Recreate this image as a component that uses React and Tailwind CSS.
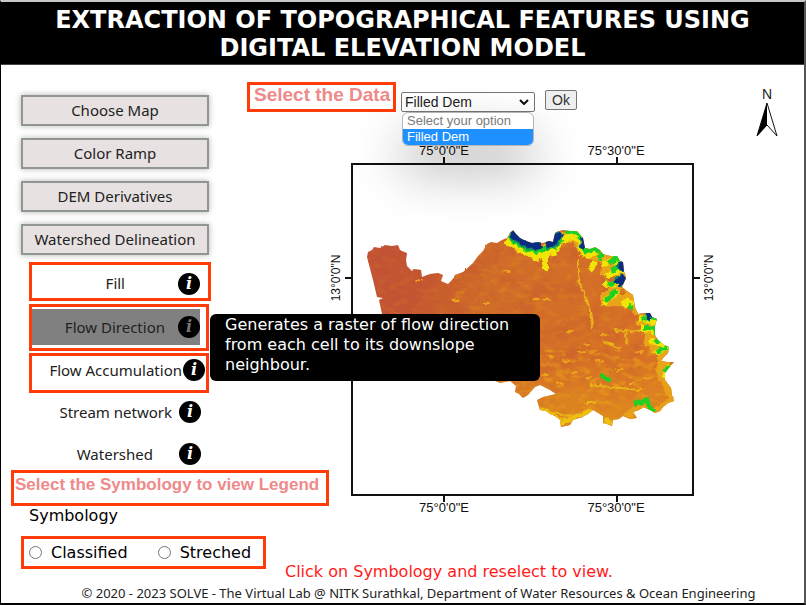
import React from "react";

const COAST =
  "M367 257 L368 252 L372 250 L374 247 L380 248 L385 245 L392 246 L398 245 L400 250 L402 251 L407 253 L406 260 L407 266 L412 271 L414 269 L421 270 L422 277 L430 274 L438 273 L443 275 L441 281 L448 284 L452 280 L455 275 L463 272 L473 263 L478 256 L483 251 L487 244 L491 242 L497 243 L502 240 L507 238 L510 233 L513 230 L516 234 L520 238 L526 241 L532 243 L538 242 L543 243 L549 241 L553 242 L555 233 L559 231 L563 230 L570 231 L577 231 L583 238 L585 248 L590 249 L595 247 L600 250 L603 254 L606 255 L611 256 L617 256 L620 261 L623 262 L624 271 L626 278 L622 287 L627 291 L633 295 L635 307 L638 314 L644 313 L650 313 L652 317 L657 319 L655 326 L655 335 L658 340 L664 345 L669 347 L668 353 L664 357 L661 361 L667 362 L674 362 L669 368 L665 373 L665 380 L671 388 L672 395 L674 401 L668 403 L663 407 L660 411 L655 413 L650 410 L643 407 L639 410 L633 412 L637 418 L630 419 L623 416 L619 419 L613 420 L612 426 L607 424 L603 423 L603 416 L598 413 L593 410 L588 414 L582 417 L573 420 L570 425 L561 427 L560 420 L555 416 L550 414 L546 411 L540 410 L537 400 L543 397 L556 394 L550 390 L540 385 L535 387 L528 395 L523 398 L519 394 L515 392 L516 386 L510 381 L500 383 L470 370 L420 352 L385 338 L382 314 L379 300 L383 298 L377 297 L373 280 Z";

const AMBER = [
  "M508 238 L520 246 L535 252 L552 248 L560 238 L576 234 L584 250 L604 258 L622 272 L621 288",
  "M612 258 L604 276 M620 282 L606 300 L632 300 L630 308",
  "M640 318 L652 330 L650 342 L664 350 L662 376",
];

const YELLOW = [
  "M506 241 L518 247 L530 253 L537 257 L548 252 L557 248 L563 240 L573 235 L580 243 L582 252 L588 256 L598 252",
  "M535 252 L536 261 M545 252 L545 270 M525 248 L527 256 M553 250 L554 256",
  "M602 264 L614 259 L622 270 L605 277 M622 283 L603 284 M618 290 L603 304 M596 262 L590 270",
  "M622 302 L634 304 M624 308 L630 300",
  "M639 318 L656 322 M640 328 L656 332 M650 340 L668 347 L656 353 M664 378 L670 365",
];

const GREEN = [
  "M509 236 L518 244 L528 249 L537 252 L546 248 L555 246 L562 240",
  "M564 231 L577 232 L582 240 L585 251 L595 249 L600 251",
  "M599 261 L603 253 M609 263 L618 257 L624 270 M611 270 L624 266 M607 284 L624 280 M617 290 L606 301",
  "M628 306 L633 308",
  "M642 320 L650 314 L657 320 M644 328 L656 328 L655 335 M655 340 L660 341 M657 352 L668 347 M664 373 L669 366",
  "M600 376 L611 380 M634 404 L646 400 L654 412",
];

const NAVY = [
  "M514 231 L516 237 L525 243 L534 246 L541 244",
  "M546 244 L553 243 L557 237 L561 233",
  "M584 239 L585 248",
  "M621 261 L624 270 M625 277 L617 284",
  "M647 315 L652 317",
];

const VALLEYS =
  "M578 259 L578 275 L582 290 L589 306 L593 330 M603 342 L620 348 M625 332 L628 345 M614 330 L640 332 M552 413 L573 416 M583 403 L596 403 M590 385 L640 390";

const SPECKS = [
  [420, 281], [455, 300], [487, 303], [506, 271], [547, 300], [536, 299], [570, 331],
  [586, 344], [552, 356], [582, 352], [566, 361], [604, 335], [640, 352],
  [600, 360], [620, 370], [575, 372], [590, 378], [545, 375], [647, 378], [560, 383], [632, 384],
];

function InfoIcon({ dim = false }) {
  return (
    <span
      aria-hidden="true"
      className={`flex size-[22px] shrink-0 items-center justify-center rounded-full bg-black font-['DejaVu_Serif','Liberation_Serif',serif] text-[16px] leading-none font-bold italic ${
        dim ? "text-[#777777]" : "text-white"
      }`}
    >
      i
    </span>
  );
}

function MenuButton({ children }) {
  return (
    <button
      type="button"
      className="h-[31px] w-[188px] border-2 border-[#909690] bg-[#e7e1e1] text-center leading-none whitespace-nowrap text-[#222222] shadow-[0_0_6px_rgba(0,0,0,0.3)]"
    >
      {children}
    </button>
  );
}

function Strokes({ paths, color, width }) {
  return paths.map((d) => <path key={d} d={d} stroke={color} strokeWidth={width} />);
}

function Terrain() {
  return (
    <g>
      <defs>
        <clipPath id="basin">
          <path d={COAST} />
        </clipPath>
        <linearGradient id="base" x1="0" x2="1" y1="0.1" y2="0.3">
          <stop offset="0" stopColor="#c25236" />
          <stop offset="0.2" stopColor="#c45632" />
          <stop offset="0.4" stopColor="#cf6a2a" />
          <stop offset="1" stopColor="#d87226" />
        </linearGradient>
        <linearGradient id="lowland" x1="0" x2="0" y1="0" y2="1">
          <stop offset="0.65" stopColor="#e8a015" stopOpacity="0" />
          <stop offset="1" stopColor="#e8a015" stopOpacity="0.6" />
        </linearGradient>
        <filter id="grain" x="0" y="0" width="1" height="1" colorInterpolationFilters="sRGB">
          <feTurbulence type="fractalNoise" baseFrequency="0.09 0.16" numOctaves="4" seed="7" />
          <feColorMatrix values="0 0 0 0 0.92  0 0 0 0 0.64  0 0 0 0 0.1  3.2 0 0 0 -1.5" />
        </filter>
        <filter id="shade" x="0" y="0" width="1" height="1" colorInterpolationFilters="sRGB">
          <feTurbulence type="fractalNoise" baseFrequency="0.05" numOctaves="4" seed="21" />
          <feColorMatrix values="0 0 0 0 0.77  0 0 0 0 0.33  0 0 0 0 0.2  0 4 0 0 -1.8" />
        </filter>
        <filter id="rough" x="-0.1" y="-0.1" width="1.2" height="1.2" colorInterpolationFilters="sRGB">
          <feTurbulence type="fractalNoise" baseFrequency="0.2" numOctaves="2" seed="4" />
          <feDisplacementMap in="SourceGraphic" scale="6" xChannelSelector="R" yChannelSelector="G" />
          <feGaussianBlur stdDeviation="0.7" />
        </filter>
        <filter id="edge" x="-0.05" y="-0.05" width="1.1" height="1.1" colorInterpolationFilters="sRGB">
          <feTurbulence type="fractalNoise" baseFrequency="0.25" numOctaves="1" seed="9" />
          <feDisplacementMap in="SourceGraphic" scale="2" xChannelSelector="R" yChannelSelector="G" />
        </filter>
      </defs>
      <g filter="url(#edge)">
        <path d={COAST} fill="url(#base)" />
        <g clipPath="url(#basin)">
          <rect x="365" y="228" width="312" height="202" filter="url(#shade)" opacity="0.3" />
          <path d="M480 225 H680 V430 H480 Z" fill="url(#lowland)" />
          <rect x="455" y="228" width="222" height="132" filter="url(#grain)" opacity="0.25" />
          <rect x="500" y="350" width="177" height="80" filter="url(#grain)" opacity="0.6" />
          <rect x="365" y="228" width="100" height="102" filter="url(#grain)" opacity="0.15" />
          <g fill="none" filter="url(#rough)" strokeLinejoin="round">
            <path d="M626 285 L634 297 L638 315 M656 340 L664 350 L662 376 L674 401 L655 413 L643 407 L625 417" stroke="#e7a018" strokeWidth="8" />
            <path d="M540 408 L562 422 L575 418 L592 410 M604 420 L614 424" stroke="#ecc012" strokeWidth="5" />
            <Strokes paths={AMBER} color="#e8a51a" width="12" />
            <Strokes paths={YELLOW} color="#f2e406" width="6" />
            <path d={VALLEYS} stroke="#e9b416" strokeWidth="2" />
            <Strokes paths={GREEN} color="#1fd024" width="5" />
            <Strokes paths={NAVY} color="#17836c" width="10" />
            <Strokes paths={NAVY} color="#0b2d80" width="7" />
          </g>
          <g filter="url(#rough)" fill="#eaa31b">
            {SPECKS.map(([x, y]) => <ellipse key={`${x}-${y}`} cx={x} cy={y} rx="4" ry="1.2" />)}
          </g>
        </g>
      </g>
    </g>
  );
}

function MapFigure() {
  return (
    <svg viewBox="328 142 390 374" className="h-[374px] w-[390px] shrink-0" role="img" aria-label="Filled DEM map">
      <Terrain />
      <g fill="none" stroke="#111111" strokeWidth="2">
        <rect x="352" y="164" width="341" height="331" />
        <path d="M444 157 V164 M617 157 V164 M444 495 V502 M617 495 V502 M345 278 H352 M693 278 H700" />
      </g>
      <g className="font-['Liberation_Sans',Arial,sans-serif] text-[12px]" fill="#111111" textAnchor="middle">
        <g className="text-[13px]">
          <text x="444" y="155">75°0'0"E</text>
          <text x="616" y="155">75°30'0"E</text>
          <text x="444" y="512">75°0'0"E</text>
          <text x="616" y="512">75°30'0"E</text>
        </g>
        <text transform="translate(340 278) rotate(-90)">13°0'0"N</text>
        <text transform="translate(713 278) rotate(-90)">13°0'0"N</text>
      </g>
    </svg>
  );
}

function NorthArrow() {
  return (
    <svg viewBox="0 0 24 52" className="h-[52px] w-6" role="img" aria-label="North">
      <text x="12" y="13" textAnchor="middle" fill="#222222" className="font-['Liberation_Sans',Arial,sans-serif] text-[14px]">N</text>
      <path d="M12 17 L2 50 L12 39 L22 50 Z" fill="#ffffff" stroke="#111111" strokeWidth="1" />
      <path d="M12 17 L2 50 L12 39 Z" fill="#000000" />
    </svg>
  );
}

export default function App() {
  return (
    <div className="flex min-h-screen flex-col border-t-2 border-r-2 border-b-2 border-l border-t-[#c4c8c6] border-r-[#555555] border-b-black border-l-black bg-white font-['Noto_Sans','Open_Sans',sans-serif] text-[15px] text-[#222222]">
      <header className="border-b border-[#444444] bg-black px-12 pt-1 pb-[2px] text-center">
        <h1 className="font-['DejaVu_Sans',Verdana,sans-serif] text-[24px] leading-7 font-bold whitespace-nowrap text-white">
          EXTRACTION OF TOPOGRAPHICAL FEATURES USING
          <br />
          DIGITAL ELEVATION MODEL
        </h1>
      </header>

      <main className="flex flex-1">
        <div className="w-[246px] shrink-0 pt-[30px]">
          <nav className="flex flex-col gap-3 pl-5">
            <MenuButton>Choose Map</MenuButton>
            <MenuButton>Color Ramp</MenuButton>
            <MenuButton>DEM Derivatives</MenuButton>
            <MenuButton>Watershed Delineation</MenuButton>
          </nav>

          <ul className="flex flex-col pt-[7px] pl-7 whitespace-nowrap">
            <li className="flex h-[39px] w-[182px] border-3 border-[#ff3c0a]">
              <button type="button" className="flex flex-1 items-center justify-end gap-[53px] pt-1 pr-2">
                Fill <InfoIcon />
              </button>
            </li>
            <li className="relative mt-[3px] flex h-[47px] w-[180px] border-3 border-[#ff3c0a] py-[2px]">
              <button type="button" className="flex h-9 w-[168px] items-center justify-end gap-[13px] bg-[#808080]">
                Flow Direction <InfoIcon dim />
              </button>
              <div
                role="tooltip"
                className="absolute top-[7px] left-[178px] z-20 w-[330px] rounded-md bg-black px-[15px] pt-px pb-[6px] font-['DejaVu_Sans',Verdana,sans-serif] text-[16px] leading-5 whitespace-normal text-white"
              >
                Generates a raster of flow direction from each cell to its downslope neighbour.
              </div>
            </li>
            <li className="mt-[2px] flex h-10 w-[180px] border-3 border-[#ff3c0a]">
              <button type="button" className="flex flex-1 items-center justify-end gap-px pr-px pb-[6px]">
                Flow Accumulation <InfoIcon />
              </button>
            </li>
            <li className="mt-[3px] flex h-8 w-[172px]">
              <button type="button" className="flex flex-1 items-center justify-end gap-[7px]">
                Stream network <InfoIcon />
              </button>
            </li>
            <li className="mt-[10px] flex h-8 w-[172px]">
              <button type="button" className="flex flex-1 items-center justify-end gap-[26px]">
                Watershed <InfoIcon />
              </button>
            </li>
          </ul>

          <p className="ml-[10px] h-9 w-[318px] border-3 border-[#ff3c0a] pl-px font-['Liberation_Sans',Arial,sans-serif] text-[17px] leading-6 font-bold whitespace-nowrap text-[#ee8a8a]">
            Select the Symbology to view Legend
          </p>

          <fieldset className="font-['DejaVu_Sans',Verdana,sans-serif] text-[16px] text-black">
            <legend className="pl-7 leading-5">Symbology</legend>
            <div className="mt-[10px] ml-5 flex h-[33px] w-[245px] items-center gap-[30px] border-3 border-[#ff3c0a] pl-[5px]">
              <label className="flex items-center gap-[9px]">
                <input type="radio" name="symbology" className="size-[13px]" />
                Classified
              </label>
              <label className="flex items-center gap-[9px]">
                <input type="radio" name="symbology" className="size-[13px]" />
                Streched
              </label>
            </div>
          </fieldset>
        </div>

        <section className="flex min-w-0 flex-1 flex-col pt-[17px]">
          <div className="flex items-start font-['Liberation_Sans',Arial,sans-serif]">
            <label
              htmlFor="layer"
              className="h-[30px] w-[149px] border-3 border-[#ff3c0a] pl-1 text-[19px] leading-5 font-bold whitespace-nowrap text-[#ee8a8a]"
            >
              Select the Data
            </label>
            <div className="relative mt-[10px] ml-[5px]">
              <select
                id="layer"
                defaultValue="filled"
                className="block h-5 w-[134px] appearance-none rounded-xs border border-[#767676] bg-white pl-[3px] text-[14px] leading-4 text-[#222222]"
              >
                <option value="">Select your option</option>
                <option value="filled">Filled Dem</option>
              </select>
              <svg viewBox="0 0 10 6" className="pointer-events-none absolute top-[7px] right-[6px] h-[6px] w-[10px]" fill="none" stroke="#111111" strokeWidth="2">
                <path d="M1 1 L5 5 L9 1" />
              </svg>
              <ul
                role="listbox"
                aria-label="Options"
                className="absolute top-5 left-px z-10 w-[132px] overflow-hidden rounded-md border border-[#b5b5b5] bg-white text-[13px] leading-4 shadow-[0_25px_50px_rgba(0,0,0,0.3)]"
              >
                <li role="option" aria-selected="false" className="pl-1 text-[#7a7a7a]">Select your option</li>
                <li role="option" aria-selected="true" className="bg-[#1e90ff] pl-1 text-white">Filled Dem</li>
              </ul>
            </div>
            <button type="button" className="mt-2 ml-[10px] h-5 w-8 rounded-xs border border-[#767676] bg-[#efefef] text-[14px] leading-none text-[#333333]">
              Ok
            </button>
            <div className="mt-1 mr-[25px] ml-auto">
              <NorthArrow />
            </div>
          </div>
          <div className="mt-1 pl-[81px]">
            <MapFigure />
          </div>
          <p className="mt-[46px] pl-[38px] font-['DejaVu_Sans',Verdana,sans-serif] text-[16px] leading-5 whitespace-nowrap text-[#ff1a1a]">
            Click on Symbology and reselect to view.
          </p>
        </section>
      </main>

      <footer className="pl-8 text-center text-[13px] leading-5">
        © 2020 - 2023 SOLVE - The Virtual Lab @ NITK Surathkal, Department of Water Resources &amp; Ocean Engineering
      </footer>
    </div>
  );
}
